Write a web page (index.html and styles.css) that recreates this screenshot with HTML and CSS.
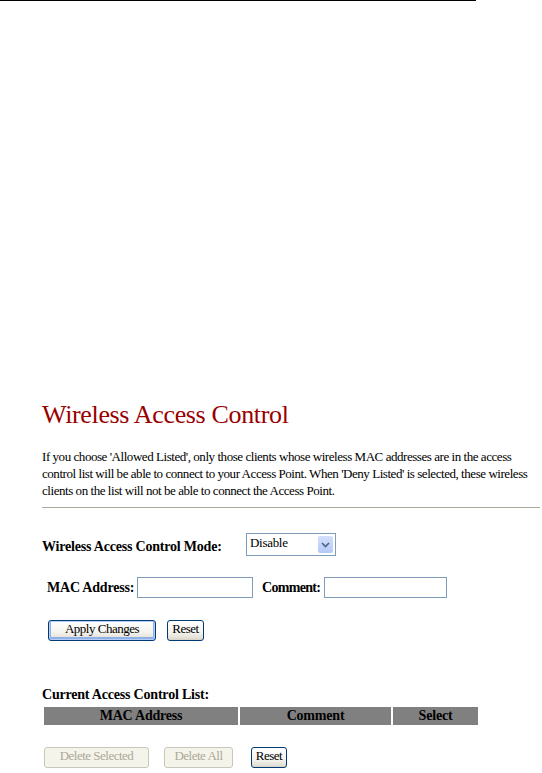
FILE: index.html
```html
<!DOCTYPE html>
<html lang="en">
<head>
    <meta charset="UTF-8">
    <title>Wireless Access Control</title>
    <link rel="stylesheet" href="styles.css">
</head>
<body>

    <div class="top-line"></div>

    <div class="content">
        <h1>Wireless Access Control</h1>
        <p class="intro">If you choose 'Allowed Listed', only those clients whose wireless MAC addresses are in the access control list will be able to connect to your Access Point. When 'Deny Listed' is selected, these wireless clients on the list will not be able to connect the Access Point.</p>
        <hr>

        <form>
            <div class="row mode-row">
                <label class="label" for="mode">Wireless Access Control Mode:</label>
                <div class="select">
                    <span class="select-value">Disable</span>
                    <span class="select-arrow">
                        <svg width="9" height="6" viewBox="0 0 9 6"><path d="M1 1 L4.5 4.5 L8 1" fill="none" stroke="#4d6185" stroke-width="1.6"/></svg>
                    </span>
                </div>
            </div>

            <div class="row mac-row">
                <label class="label mac-label" for="mac">MAC Address:</label>
                <input class="text mac-input" type="text" id="mac">
                <label class="label comment-label" for="comment">Comment:</label>
                <input class="text comment-input" type="text" id="comment">
            </div>

            <div class="row btn-row">
                <button type="button" class="btn btn-default apply-btn">Apply Changes</button>
                <button type="button" class="btn reset-top">Reset</button>
            </div>
        </form>

        <div class="list-title">Current Access Control List:</div>
        <table class="acl-table">
            <tr>
                <th class="col-mac">MAC Address</th>
                <th class="col-comment">Comment</th>
                <th class="col-select">Select</th>
            </tr>
        </table>

        <div class="row bottom-row">
            <button type="button" class="btn del-sel" disabled>Delete Selected</button>
            <button type="button" class="btn del-all" disabled>Delete All</button>
            <button type="button" class="btn reset-btn">Reset</button>
        </div>
    </div>

</body>
</html>
```

FILE: styles.css
```css
body {
    margin: 0;
    font-family: "Liberation Serif", "Times New Roman", serif;
    font-size: 14px;
    color: #000;
    background: #fff;
}
.top-line {
    width: 476px;
    height: 1px;
    background: #000;
}
.content {
    padding: 399px 2px 0 42px;
}
h1 {
    margin: 0;
    font-size: 26px;
    font-weight: normal;
    letter-spacing: -0.35px;
    color: #990000;
    line-height: 30px;
}
.intro {
    margin: 18px 0 0;
    font-size: 13px;
    letter-spacing: -0.45px;
    line-height: 17px;
}
hr {
    margin: 8px 0 0;
    border: none;
    border-top: 1px solid #aca899;
    height: 0;
}
.row {
    display: flex;
    align-items: center;
}
.label {
    font-weight: bold;
    font-size: 14px;
    letter-spacing: -0.2px;
    white-space: nowrap;
}
.mode-row {
    margin-top: 25px;
}
.mode-row .label {
    width: 204px;
    padding-top: 4px;
}
.select {
    width: 88px;
    height: 21px;
    border: 1px solid #7f9db9;
    display: flex;
    align-items: center;
    justify-content: space-between;
    background: #fff;
}
.select-value {
    padding-left: 3px;
    font-size: 13px;
    letter-spacing: -0.3px;
    line-height: 17px;
    margin-top: -4px;
}
.select-arrow {
    width: 15px;
    height: 17px;
    margin-right: 2px;
    border-radius: 2px;
    background: linear-gradient(#d3e0fc, #b4c9f6);
    display: flex;
    align-items: center;
    justify-content: center;
}
.mac-row {
    margin-top: 21px;
    padding-left: 5px;
}
.mac-label {
    width: 90px;
}
.text {
    height: 21px;
    box-sizing: border-box;
    border: 1px solid #7f9db9;
    padding: 0 2px;
    font-family: inherit;
    font-size: 14px;
    margin: 0;
}
.mac-input {
    width: 116px;
}
.comment-label {
    margin-left: 9px;
    width: 62px;
    letter-spacing: -0.7px;
}
.comment-input {
    width: 123px;
}
.btn-row {
    margin-top: 22px;
    padding-left: 6px;
}
.btn {
    height: 21px;
    padding: 0 0 3px;
    font-family: inherit;
    font-size: 13px;
    letter-spacing: -0.5px;
    white-space: nowrap;
    color: #000;
    border: 1px solid #003c74;
    border-radius: 3px;
    background: linear-gradient(#ffffff, #f4f3ee 60%, #e3e0d6 90%, #d6d0c5);
    line-height: 16px;
}
.btn-default {
    box-shadow: inset 0 0 0 1px #b5cdf5, inset 0 -1px 0 2px #8fb0e8;
}
.apply-btn {
    width: 108px;
}
.reset-top {
    width: 37px;
    margin-left: 11px;
}
.btn:disabled {
    color: #aca899;
    border-color: #c9c7ba;
    background: #f5f4ea;
}
.list-title {
    margin-top: 45px;
    font-weight: bold;
    font-size: 14px;
    letter-spacing: -0.2px;
    line-height: 17px;
}
.acl-table {
    margin-top: 2px;
    border-collapse: separate;
    border-spacing: 2px;
}
.acl-table th {
    background: #808080;
    height: 18px;
    padding: 0;
    font-size: 14px;
    font-weight: bold;
    letter-spacing: -0.2px;
    line-height: 16px;
}
.col-mac {
    width: 194px;
}
.col-comment {
    width: 151px;
}
.col-select {
    width: 85px;
}
.bottom-row {
    margin-top: 20px;
    padding-left: 2px;
}
.del-sel {
    width: 105px;
}
.del-all {
    width: 69px;
    margin-left: 15px;
}
.reset-btn {
    width: 36px;
    margin-left: 18px;
}
```
